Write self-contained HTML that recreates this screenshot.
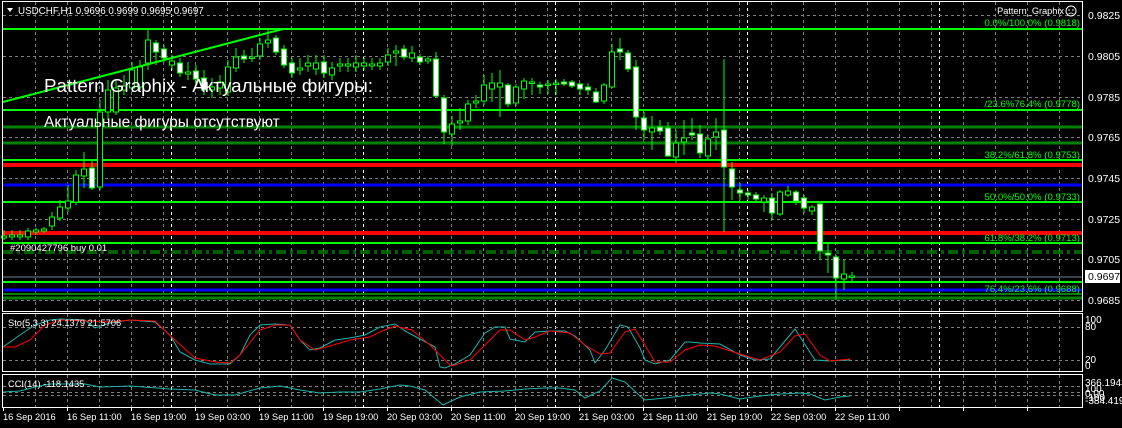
<!DOCTYPE html>
<html><head><meta charset="utf-8"><style>
html,body{margin:0;padding:0;background:#000;width:1122px;height:428px;overflow:hidden}
svg{display:block}
text{font-family:"Liberation Sans",sans-serif}
</style></head><body>
<svg id="s" width="1122" height="428" viewBox="0 0 1122 428" xmlns="http://www.w3.org/2000/svg">
<rect width="1122" height="428" fill="#000"/>
<g id="grid"></g>
<g id="levels"></g>
<line x1="3" y1="102" x2="283" y2="29" stroke="#00ff00" stroke-width="2"/>
<g id="candles"></g>
<g id="ind"></g>
<rect x="2.5" y="1.5" width="1080" height="310" fill="none" stroke="#fff" stroke-width="1"/>
<rect x="2.5" y="313.5" width="1080" height="58" fill="none" stroke="#fff" stroke-width="1"/>
<rect x="2.5" y="374.5" width="1080" height="33" fill="none" stroke="#fff" stroke-width="1"/>
<text x="18" y="14" font-size="9.8" fill="#fff">USDCHF,H1  0.9696 0.9699 0.9695 0.9697</text>
<path d="M7 8 L13 8 L10 12 Z" fill="#fff"/>
<text x="44" y="92" font-size="18.8" fill="#fff">Pattern Graphix - Актуальные фигуры:</text>
<text x="44" y="127" font-size="15.5" fill="#fff">Актуальные фигуры отсутствуют</text>
<text x="10" y="251" font-size="9.5" fill="#fff">#2090427796 buy 0.01</text>
<text x="1064" y="14" font-size="9.2" fill="#fff" text-anchor="end">Pattern_Graphix</text>
<circle cx="1071" cy="11" r="5" fill="none" stroke="#fff" stroke-width="1"/>
<circle cx="1069" cy="10" r="0.8" fill="#fff"/><circle cx="1073" cy="10" r="0.8" fill="#fff"/>
<path d="M1068.5 14 Q1071 12 1073.5 14" fill="none" stroke="#fff" stroke-width="0.8"/>
<g font-size="9.6" fill="#00ff00" text-anchor="end">
<text x="1080" y="26">0.0%/100.0% (0.9818)</text>
<text x="1080" y="107">/23.6%76.4% (0.9778)</text>
<text x="1080" y="158">38.2%/61.8% (0.9753)</text>
<text x="1080" y="200">50.0%/50.0% (0.9733)</text>
<text x="1080" y="241">61.8%/38.2% (0.9713)</text>
<text x="1080" y="292">76.4%/23.6% (0.9688)</text>
</g>
<g font-size="10.5" fill="#fff">
<text x="1088" y="19">0.9825</text><text x="1088" y="60">0.9805</text>
<text x="1088" y="101">0.9785</text><text x="1088" y="141">0.9765</text>
<text x="1088" y="182">0.9745</text><text x="1088" y="223">0.9725</text>
<text x="1088" y="263">0.9705</text><text x="1088" y="304">0.9685</text>
<text x="1085" y="323" font-size="10">100</text><text x="1085" y="330" font-size="10">80</text>
<text x="1085" y="363" font-size="10">20</text><text x="1085" y="369" font-size="10">0</text>
<text x="1085" y="386" font-size="10">366.1943</text><text x="1085" y="392" font-size="10">100</text>
<text x="1085" y="397" font-size="10">0.00</text><text x="1085" y="401" font-size="10">-100</text>
<text x="1085" y="404" font-size="10">-384.419</text>
</g>
<rect x="1085" y="270" width="35" height="13" fill="#fff"/>
<text x="1088" y="280" font-size="10.5" fill="#000">0.9697</text>
<text x="8" y="326" font-size="9.3" fill="#fff">Sto(5,3,3) 24.1379 21.5706</text>
<text x="8" y="387" font-size="9.3" fill="#fff">CCI(14) -118.1435</text>
<g id="times" font-size="9.3" fill="#fff"></g>
</svg>
<script>
var NS="http://www.w3.org/2000/svg";
function el(p,t,a){var e=document.createElementNS(NS,t);for(var k in a)e.setAttribute(k,a[k]);p.appendChild(e);return e;}
var g=document.getElementById("grid");
for(var x=3+32;x<1082;x+=32){
 var sep=[171,363,555,747,939].some(function(v){return Math.abs(v-x)<3});
 if(!sep){[[2,311],[314,371],[375,407]].forEach(function(r){el(g,"line",{x1:x+.5,y1:r[0],x2:x+.5,y2:r[1],stroke:"#808080","stroke-dasharray":"3,3"});});}
}
[171,363,555,747,939].forEach(function(x){[[2,311],[314,371],[375,407]].forEach(function(r){el(g,"line",{x1:x+.5,y1:r[0],x2:x+.5,y2:r[1],stroke:"#fff","stroke-dasharray":"3,3"});});});
[15,56,97,137,178,219,259,300,327,360,386,392,395].forEach(function(y){el(g,"line",{x1:3,y1:y+.5,x2:1082,y2:y+.5,stroke:"#808080","stroke-dasharray":"3,3"});});
for(var x=3;x<1082;x+=64){el(g,"line",{x1:x+.5,y1:408,x2:x+.5,y2:411,stroke:"#fff"});}
var L=document.getElementById("levels");
[[29,"#00ff00",2],[110,"#00ff00",2],[127,"#008000",3],[143,"#008000",3],[160,"#00ff00",2],[165,"#ff0000",4],[185,"#0000ff",3],[202,"#00ff00",2],[233,"#ff0000",4],[243,"#00ff00",2],[277,"#708090",1],[282,"#00ff00",2],[290,"#0000ff",3],[294,"#00ff00",1],[298,"#008000",3]].forEach(function(l){el(L,"line",{x1:3,y1:l[0],x2:1083,y2:l[0],stroke:l[1],"stroke-width":l[2]});});
el(L,"line",{x1:3,y1:251,x2:1082,y2:251,stroke:"#00c000","stroke-dasharray":"10,4,3,4"});
el(L,"line",{x1:3,y1:253,x2:1082,y2:253,stroke:"#00c000","stroke-dasharray":"10,4,3,4"});
var C=[[236,238,0,230,240],[235,237,0,230,240],[235,237,0,230,240],[231,237,0,228,240],[230,232,0,228,235],[229,231,0,227,233],[217,226,0,212,230],[207,218,0,200,221],[201,208,0,185,212],[175,202,0,170,205],[169,176,0,152,188],[168,188,1,160,190],[112,187,0,100,190],[90,112,0,80,120],[88,112,0,80,115],[86,90,0,75,95],[70,88,0,62,92],[67,87,0,60,90],[40,63,0,30,70],[43,52,1,40,65],[49,58,1,45,62],[61,65,0,55,70],[63,73,1,58,77],[72,74,0,62,80],[71,79,1,65,85],[78,90,1,70,95],[87,90,0,78,98],[82,88,0,75,95],[67,92,0,60,96],[57,68,0,48,72],[56,59,1,50,63],[57,58,0,48,62],[44,56,0,38,60],[40,43,0,28,48],[38,52,1,35,55],[49,65,1,45,68],[63,73,1,58,78],[68,70,0,58,75],[63,66,0,55,72],[63,69,0,55,75],[62,73,1,55,78],[68,75,0,62,80],[64,66,0,58,72],[64,66,0,58,72],[63,67,0,55,72],[63,66,0,58,70],[64,66,0,58,70],[63,66,0,58,70],[55,62,0,48,66],[51,53,0,45,66],[49,57,1,45,60],[53,58,0,46,62],[57,62,1,54,65],[59,61,0,56,64],[59,96,1,52,98],[98,132,1,95,144],[124,134,0,116,146],[121,123,0,108,130],[104,121,0,100,125],[101,103,0,95,108],[85,101,0,75,105],[83,89,0,73,102],[83,87,0,70,117],[85,104,1,83,107],[87,103,0,84,106],[81,89,0,78,99],[82,83,0,78,95],[85,87,1,82,94],[84,85,0,80,94],[83,84,0,79,95],[82,84,1,79,86],[82,86,1,80,88],[84,89,1,83,95],[87,90,1,83,95],[92,102,1,88,103],[85,101,0,83,104],[52,87,0,44,88],[49,52,1,38,60],[53,69,1,50,72],[67,117,1,60,130],[118,130,1,112,140],[128,132,0,116,150],[127,131,1,120,135],[128,156,1,122,157],[143,157,0,130,163],[138,142,0,120,155],[133,135,1,118,140],[134,153,1,125,158],[139,156,0,135,160],[132,137,0,118,150],[130,167,1,59,232],[169,187,1,162,200],[190,193,1,183,200],[193,195,1,190,200],[195,199,1,192,202],[198,202,0,195,212],[198,213,1,193,220],[192,214,0,190,216],[191,195,0,186,197],[192,201,1,190,205],[198,208,1,195,213],[207,211,0,205,215],[204,251,1,203,260],[253,255,1,244,273],[257,278,1,255,300],[274,279,0,260,290],[276,277,0,272,281]];
var cg=document.getElementById("candles");
C.forEach(function(c,i){var x=3.5+8*i;
 el(cg,"line",{x1:x+.5,y1:c[3],x2:x+.5,y2:c[4],stroke:"#00ff00","stroke-width":1});
 var h=Math.max(c[1]-c[0],1.5);
 el(cg,"rect",{x:x-2,y:c[0],width:5,height:h,fill:c[2]?"#fff":"#000",stroke:"#00ff00","stroke-width":1});
});
var I=document.getElementById("ind");
function pl(pts,col){el(I,"polyline",{points:pts,fill:"none",stroke:col,"stroke-width":1});}
pl("3,347 20,335 35,325 50,320 60,319 85,320 95,328 110,323 130,320 155,322 170,335 180,352 195,360 210,364 230,364 240,355 250,335 260,325 275,324 290,325 300,340 310,350 320,348 335,340 350,338 365,335 380,327 395,324 405,331 420,339 435,347 440,367 445,368 455,364 470,355 485,333 495,327 505,327 510,339 525,342 535,332 550,331 565,331 575,336 590,350 595,363 605,350 620,325 628,327 640,348 645,360 655,364 670,360 685,342 690,342 700,343 720,344 740,355 755,360 770,359 795,329 815,360 830,361 850,360","#20b2aa");
pl("3,347 15,347 30,340 45,325 60,320 90,321 110,322 130,320 155,321 175,340 195,358 215,362 230,363 240,355 260,330 275,325 290,325 300,340 315,350 330,346 350,340 370,337 380,332 395,326 412,330 430,345 450,365 452,366 470,360 485,345 500,330 510,330 525,340 535,337 550,331 570,333 585,345 600,354 610,353 625,332 635,329 645,345 655,362 670,362 685,350 700,345 715,346 740,354 760,360 780,352 795,336 805,334 820,355 830,361 850,359","#ff0000");
pl("3,392 20,391 35,387 50,384 85,384 100,387 130,386 170,389 195,390 215,395 235,395 260,388 280,386 300,390 320,393 340,392 360,392 380,389 400,385 410,386 425,390 443,405 460,397 480,392 505,391 525,389 545,388 560,388 575,390 585,398 600,391 612,378 625,382 640,396 645,400 665,398 690,395 710,393 720,394 740,399 760,396 780,394 800,393 810,394 825,400 840,397 850,396","#20b2aa");
var T=["16 Sep 2016","16 Sep 11:00","16 Sep 19:00","19 Sep 03:00","19 Sep 11:00","19 Sep 19:00","20 Sep 03:00","20 Sep 11:00","20 Sep 19:00","21 Sep 03:00","21 Sep 11:00","21 Sep 19:00","22 Sep 03:00","22 Sep 11:00"];
var tg=document.getElementById("times");
T.forEach(function(t,i){var e=el(tg,"text",{x:3+64*i,y:420});e.textContent=t;});
</script>
</body></html>
